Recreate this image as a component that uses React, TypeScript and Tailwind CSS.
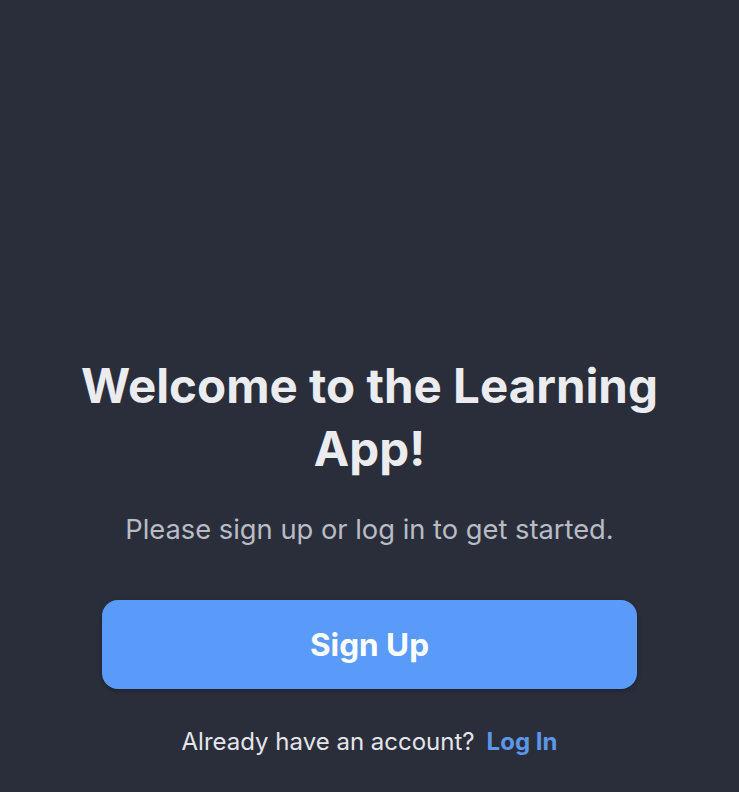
const App = () => {
  return (
    <div className="min-h-screen w-full bg-[#2a2e3b] flex flex-col items-center font-['Inter',sans-serif] pt-[354px]">
      <h1 className="text-[47.5px] leading-[63px] font-bold text-[#ebecef] text-center w-[640px]">
        Welcome to the Learning App!
      </h1>
      <p className="mt-[33px] text-[27.3px] leading-[34px] text-[#b9bcc4]">
        Please sign up or log in to get started.
      </p>
      <button className="mt-[53px] w-[535px] h-[89px] rounded-[16px] bg-[#5a9bf9] text-white text-[31.5px] font-bold shadow-[0_2px_4px_rgba(0,0,0,0.25)]">
        Sign Up
      </button>
      <div className="mt-[38px] text-[24px] leading-[30px] text-[#e4e5e9] flex items-center gap-[12px]">
        <span>Already have an account?</span>
        <span className="font-bold text-[#5d97e8]">Log In</span>
      </div>
    </div>
  );
};

export default App;
